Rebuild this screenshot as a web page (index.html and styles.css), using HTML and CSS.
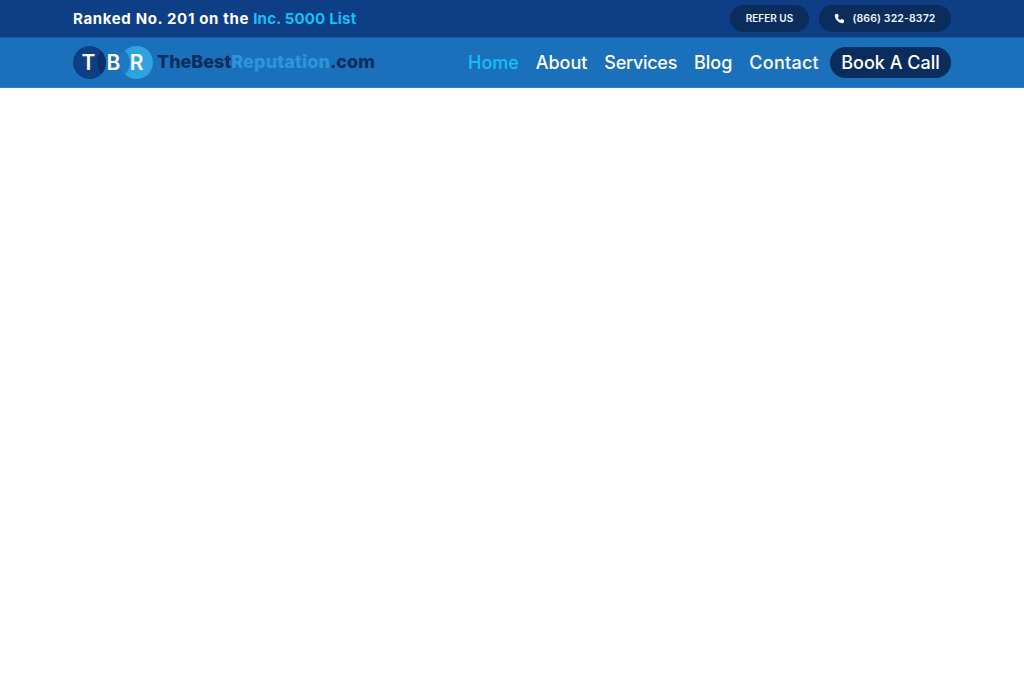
FILE: index.html
```html
<!DOCTYPE html>
<html lang="en">
<head>
<meta charset="utf-8">
<title>TheBestReputation.com</title>
<link rel="stylesheet" href="styles.css">
</head>
<body>
<header class="header">
  <div class="topbar">
    <div class="container">
      <p class="rank">Ranked No. 201 on the <a href="#" class="rank-link">Inc. 5000 List</a></p>
      <div class="top-actions">
        <a href="#" class="pill refer">REFER US</a>
        <a href="#" class="pill phone">
          <svg class="phone-icon" viewBox="0 0 24 24" aria-hidden="true"><path d="M6.6 1.8 2.9 3.1C2 3.5 1.6 4.2 1.7 5.2 2.6 14.4 9.6 21.4 18.8 22.3c1 .1 1.700-.3 2.100-1.200l1.300-3.700c.3-.8 0-1.500-.7-1.900l-4.200-2.200c-.7-.4-1.400-.2-1.900.4l-1.500 1.900c-2.600-1.300-4.700-3.400-6-6l1.900-1.500c.6-.5.8-1.200.4-1.900L8.500 2.500c-.4-.7-1.100-1-1.900-.7Z"/></svg>
          (866) 322-8372
        </a>
      </div>
    </div>
  </div>
  <div class="navbar">
    <div class="container">
      <a href="#" class="logo">
        <span class="marks">
          <svg class="marks-bg" viewBox="0 0 80 33" aria-hidden="true">
            <circle cx="16.5" cy="16.5" r="16.500" fill="#0e3e85"/>
            <circle cx="63.5" cy="16.5" r="16.500" fill="#2fa3e0"/>
            <path d="M28.500 5.180A16.500 16.500 0 0 1 28.500 27.820 16.500 16.500 0 0 1 28.500 5.180Z" fill="#0b3068"/>
            <path d="M52 4.670A16.500 16.500 0 0 1 52 28.330 16.500 16.500 0 0 1 52 4.670Z" fill="#1d78c0"/>
          </svg>
          <span class="mark mark-t">T</span>
          <span class="mark mark-b">B</span>
          <span class="mark mark-r">R</span>
        </span>
        <span class="wordmark">TheBest<span class="wordmark-mid">Reputation</span>.com</span>
      </a>
      <nav class="nav">
        <a href="#" class="nav-link active">Home</a>
        <a href="#" class="nav-link">About</a>
        <a href="#" class="nav-link nav-link-services">Services</a>
        <a href="#" class="nav-link">Blog</a>
        <a href="#" class="nav-link nav-link-contact">Contact</a>
        <a href="#" class="nav-cta">Book A Call</a>
      </nav>
    </div>
  </div>
</header>
</body>
</html>
```
FILE: styles.css
```css
* { box-sizing: border-box; }
html, body { margin: 0; padding: 0; background: #fff; }
body { font-family: "Inter", "Liberation Sans", sans-serif; height: 675px; overflow: hidden; }
a { text-decoration: none; color: inherit; }

.container {
  width: 878px;
  margin-left: 73px;
  display: flex;
  align-items: center;
  justify-content: space-between;
  height: 100%;
}

.topbar { height: 38px; background: #0e3e85; border-bottom: 1px solid #165a9f; }
.rank { margin: 0; color: #fff; font-size: 15px; font-weight: 700; letter-spacing: .65px; }
.rank-link { color: #14c0f8; letter-spacing: .2px; }
.top-actions { display: flex; gap: 10px; align-items: center; }
.pill {
  height: 27px;
  border-radius: 14px;
  background: #0a2d5e;
  color: #f1f5fa;
  display: flex;
  align-items: center;
  font-weight: 600;
}
.refer { width: 79px; justify-content: center; font-size: 10px; padding-bottom: 1px; }
.phone { width: 132px; justify-content: center; gap: 7px; font-size: 10.5px; letter-spacing: .13px; }
.phone-icon { width: 11px; height: 11px; fill: #fff; }

.navbar {
  height: 50px;
  background: #1b70bc;
  border-bottom: 1px solid #2a80c8;
}
.logo { display: flex; align-items: center; }
.marks { display: block; width: 84px; height: 33px; position: relative; }
.marks-bg { position: absolute; left: 0; top: 0; width: 80px; height: 33px; }
.mark {
  position: absolute;
  top: 0;
  width: 33px;
  height: 33px;
  color: #fff;
  font-size: 21px;
  font-weight: 600;
  display: flex;
  align-items: center;
  justify-content: center;
}
.mark-t { left: -1px; }
.mark-b { left: 24px; }
.mark-r { left: 47px; }
.wordmark {
  font-size: 18px;
  font-weight: 800;
  letter-spacing: -.02px;
  color: #0a2d5e;
  padding-bottom: 3px;
}
.wordmark-mid { color: #2f95d8; letter-spacing: .12px; }

.nav { display: flex; align-items: center; gap: 17px; }
.nav-link, .nav-cta { color: #fff; font-size: 18px; font-weight: 500; }
.nav-link { letter-spacing: -.03px; }
.nav-link-services { letter-spacing: -.28px; }
.nav-link-contact { letter-spacing: .26px; }
.nav-link.active { color: #14c0f8; }
.nav-cta {
  background: #0a2d5e;
  height: 31px;
  width: 121px;
  margin-left: -6px;
  border-radius: 16px;
  display: flex;
  align-items: center;
  justify-content: center;
}
```
